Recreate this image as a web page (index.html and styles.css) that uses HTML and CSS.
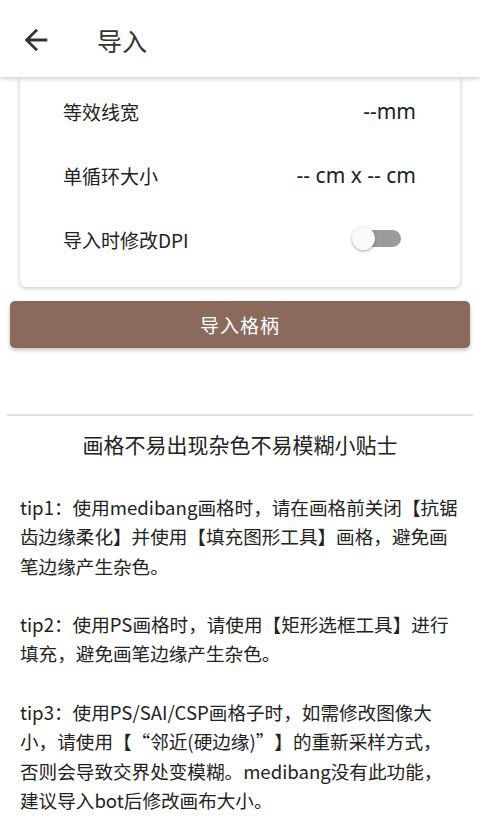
FILE: index.html
```html
<html lang="zh-CN">
  <head>
    <meta charset="utf-8" />
    <link rel="stylesheet" href="styles.css">
  </head>

  <body>
    <div class="app-bar">
      <svg class="back" viewBox="0 0 24 24" fill="#333">
        <path d="M20 11H7.83l5.59-5.59L12 4l-8 8 8 8 1.41-1.41L7.83 13H20v-2z"></path>
      </svg>
      <div class="app-title">导入</div>
    </div>

    <div class="content">
      <div class="card">
        <div class="row">
          <span>等效线宽</span>
          <span class="value">--mm</span>
        </div>
        <div class="row">
          <span>单循环大小</span>
          <span class="value">-- cm x -- cm</span>
        </div>
        <div class="row">
          <span>导入时修改DPI</span>
          <div class="switch">
            <div class="switch-track"></div>
            <div class="switch-thumb"></div>
          </div>
        </div>
      </div>

      <button class="import-btn">导入格柄</button>

      <hr class="divider" />

      <div class="tips">
        <h3>画格不易出现杂色不易模糊小贴士</h3>
        <p>tip1：使用medibang画格时，请在画格前关闭【抗锯<br />齿边缘柔化】并使用【填充图形工具】画格，避免画<br />笔边缘产生杂色。</p>
        <p>tip2：使用PS画格时，请使用【矩形选框工具】进行<br />填充，避免画笔边缘产生杂色。</p>
        <p>tip3：使用PS/SAI/CSP画格子时，如需修改图像大<br />小，请使用【<span class="q-open">“</span>邻近(硬边缘)<span class="q-close">”</span>】的重新采样方式，<br />否则会导致交界处变模糊。medibang没有此功能，<br />建议导入bot后修改画布大小。</p>
      </div>
    </div>
  </body>
</html>
```

FILE: styles.css
```css
body,
html {
  font-family: "Noto Sans CJK SC", "Noto Sans", sans-serif;
  font-size: 19px;
  color: #222;
  background: #fff;
  padding: 0;
  margin: 0;
  overflow: hidden;
}

*,
*:before,
*:after {
  box-sizing: border-box;
}

.app-bar {
  position: relative;
  z-index: 2;
  height: 77px;
  display: flex;
  align-items: center;
  background: #fff;
  box-shadow: 0 2px 4px rgba(0, 0, 0, 0.18);
}

.app-bar .back {
  width: 34px;
  height: 34px;
  margin: 3px 0 0 19px;
}

.app-title {
  margin: 3px 0 0 44px;
  font-size: 25px;
  color: #333;
}

.card {
  margin: 0 20px;
  padding: 2px 44px 16px 43px;
  background: #fff;
  border-radius: 0 0 6px 6px;
  box-shadow: 0 1px 4px rgba(0, 0, 0, 0.25);
}

.row {
  height: 64px;
  display: flex;
  align-items: center;
  justify-content: space-between;
  color: #222;
}

.row .value {
  font-family: "Noto Sans", sans-serif;
  font-size: 21px;
}

.switch {
  position: relative;
  width: 49px;
  height: 24px;
  margin-right: 15px;
}

.switch-track {
  position: absolute;
  left: 12px;
  right: 0;
  top: 3px;
  height: 17px;
  border-radius: 9px;
  background: #9b9b9b;
}

.switch-thumb {
  position: absolute;
  left: 0;
  top: 0;
  width: 23px;
  height: 23px;
  border-radius: 50%;
  background: #fafafa;
  box-shadow: 0 1px 3px rgba(0, 0, 0, 0.35);
}

.import-btn {
  display: block;
  width: 460px;
  height: 47px;
  margin: 14px 10px 0;
  border: 0;
  border-radius: 5px;
  background: #8b6a5e;
  color: #fff;
  font-family: inherit;
  font-size: 19px;
  letter-spacing: 1px;
  box-shadow: 0 2px 4px rgba(0, 0, 0, 0.25);
}

.divider {
  margin: 66px 7px 0;
  border: 0;
  border-top: 2px solid #e0e0e0;
}

.tips {
  padding: 0 0 0 20px;
}

.tips h3 {
  margin: 13px 20px 33px 0;
  font-size: 21px;
  font-weight: 400;
  line-height: 30px;
  text-align: center;
}

.tips p {
  margin: 0 0 29.3px;
  font-size: 18.6px;
  line-height: 29.3px;
  white-space: nowrap;
  text-spacing-trim: space-all;
}

/* curly quotes set in a full em box */
.q-open,
.q-close {
  display: inline-block;
  width: 1em;
}

.q-open {
  text-align: right;
}

.q-close {
  text-align: left;
}
```
